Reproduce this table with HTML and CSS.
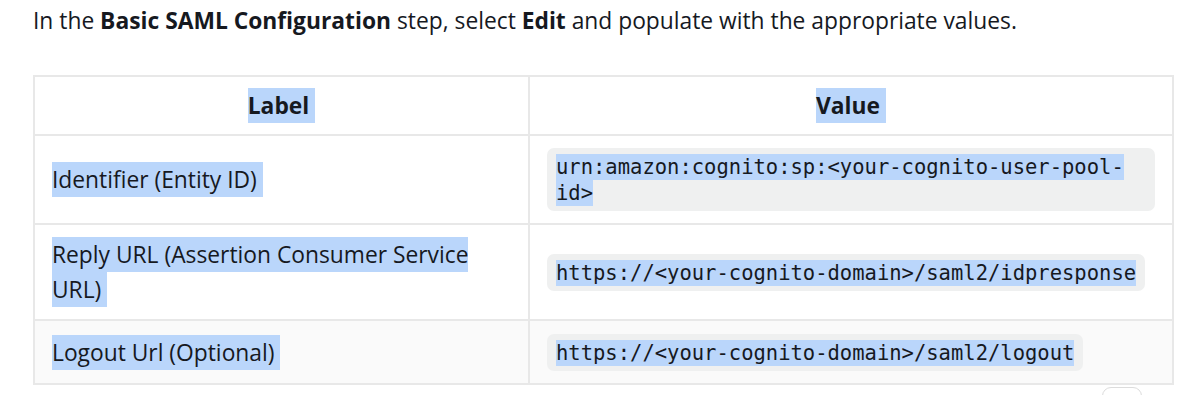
FILE: index.html
```html
<!DOCTYPE html>
<html lang="en">
<head>
<meta charset="utf-8">
<title>Basic SAML Configuration</title>
<link rel="stylesheet" href="styles.css">
</head>
<body>
<main class="page">
  <p class="intro">In the <b>Basic SAML Configuration</b> step, select <b>Edit</b> and populate with the appropriate values.</p>
  <table class="saml">
    <colgroup><col class="c1"><col class="c2"></colgroup>
    <thead>
      <tr><th><span class="sel">Label</span></th><th><span class="sel">Value</span></th></tr>
    </thead>
    <tbody>
      <tr>
        <td><span class="sel">Identifier (Entity ID)</span></td>
        <td><code class="code"><span class="csel">urn:amazon:cognito:sp:&lt;your-cognito-user-pool-id&gt;</span></code></td>
      </tr>
      <tr>
        <td><span class="sel">Reply URL (Assertion Consumer Service URL)</span></td>
        <td><code class="code"><span class="csel">https://&lt;your-cognito-domain&gt;/saml2/idpresponse</span></code></td>
      </tr>
      <tr class="alt">
        <td><span class="sel">Logout Url (Optional)</span></td>
        <td><code class="code"><span class="csel">https://&lt;your-cognito-domain&gt;/saml2/logout</span></code></td>
      </tr>
    </tbody>
  </table>
  <div class="tools"><div class="tool-btn"></div></div>
</main>
</body>
</html>
```

FILE: styles.css
```css
html, body {
  margin: 0;
  padding: 0;
  background: #ffffff;
}
body {
  font-family: "Open Sans", "Noto Sans", sans-serif;
  color: #16191f;
  overflow: hidden;
}
.page {
  box-sizing: border-box;
  height: 395px;
  overflow: hidden;
  padding: 0 26px 0 33px;
}
.intro {
  margin: 0;
  padding-top: 4px;
  font-size: 22.8px;
  line-height: 34px;
}
.intro b {
  font-weight: 700;
}
.saml {
  width: 100%;
  margin-top: 37px;
  border-collapse: collapse;
  border: 2px solid #e8e8e8;
  font-size: 22.8px;
  line-height: 35px;
}
.c1 { width: 495px; }
.saml th,
.saml td {
  border: 2px solid #e8e8e8;
  padding: 12px 17px 12px;
  vertical-align: middle;
  text-align: left;
}
.saml th {
  padding-top: 11px;
  padding-bottom: 11px;
  text-align: center;
  font-weight: 700;
}
.saml tr.alt td {
  background: #fafafa;
}
.sel {
  background: #bad6fb;
  padding: 2px 6px 2px 0;
}
.code {
  display: inline-block;
  vertical-align: middle;
  font-family: "DejaVu Sans Mono", "Liberation Mono", monospace;
  font-size: 20.5px;
  line-height: 26px;
  padding: 6px 9px 5px;
  background: #eff0f0;
  border-radius: 7px;
}
.csel {
  background: #bad6fb;
  padding: 1px 0;
}
.tools {
  display: flex;
  justify-content: flex-end;
  padding-right: 32px;
  margin-top: 2px;
}
.tool-btn {
  flex: none;
  width: 38px;
  height: 30px;
  border: 1px solid #dcdcdc;
  border-radius: 9px;
  background: #fff;
}
```
